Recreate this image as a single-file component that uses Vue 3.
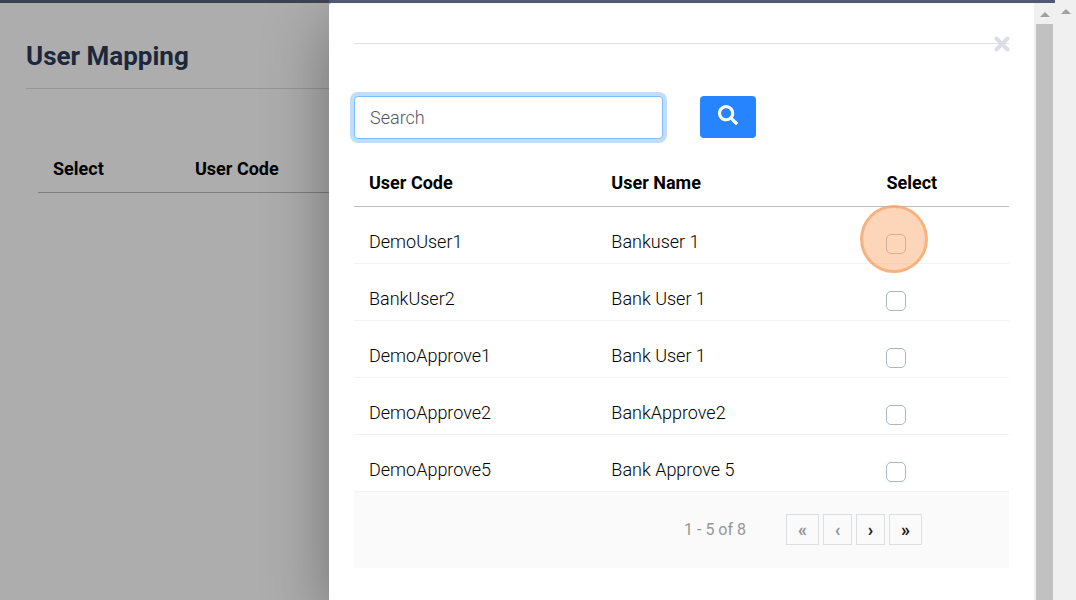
<script setup>
import { ref } from 'vue'

const search = ref('')
const users = ref([
  { code: 'DemoUser1', name: 'Bankuser 1', selected: false },
  { code: 'BankUser2', name: 'Bank User 1', selected: false },
  { code: 'DemoApprove1', name: 'Bank User 1', selected: false },
  { code: 'DemoApprove2', name: 'BankApprove2', selected: false },
  { code: 'DemoApprove5', name: 'Bank Approve 5', selected: false },
])
const pages = [
  { label: 'First page', glyph: '«', disabled: true, wide: true },
  { label: 'Previous page', glyph: '‹', disabled: true, wide: false },
  { label: 'Next page', glyph: '›', disabled: false, wide: false },
  { label: 'Last page', glyph: '»', disabled: false, wide: true },
]
</script>

<template>
  <div class="shell">
    <div class="viewport">
      <div class="topbar"></div>
      <main class="page">
        <h1>User Mapping</h1>
        <table class="mapping">
          <thead>
            <tr><th>Select</th><th>User Code</th></tr>
          </thead>
        </table>
      </main>

      <div class="overlay">
        <section class="modal" role="dialog" aria-label="Select user">
          <div class="content">
            <header class="modal-head">
              <button class="close" type="button" aria-label="Close">
                <svg viewBox="0 0 16 16" width="16" height="16">
                  <path d="M2.500 2.500 13.500 13.500M13.500 2.500 2.500 13.500" />
                </svg>
              </button>
            </header>

            <form class="search" @submit.prevent>
              <input v-model="search" type="text" placeholder="Search" aria-label="Search" />
              <button type="submit" aria-label="Search users">
                <svg viewBox="0 0 512 512" width="20" height="20">
                  <path d="M505 442.7 405.3 343c-4.500-4.500-10.600-7-17-7H372c27.600-35.300 44-79.700 44-128C416 93.100 322.900 0 208 0S0 93.100 0 208s93.100 208 208 208c48.300 0 92.700-16.400 128-44v16.300c0 6.400 2.500 12.500 7 17l99.700 99.700c9.400 9.400 24.600 9.400 33.900 0l28.300-28.300c9.400-9.400 9.400-24.600.100-34zM208 336c-70.700 0-128-57.200-128-128 0-70.700 57.200-128 128-128 70.700 0 128 57.200 128 128 0 70.700-57.200 128-128 128z" />
                </svg>
              </button>
            </form>

            <table class="users">
              <thead>
                <tr><th>User Code</th><th>User Name</th><th>Select</th></tr>
              </thead>
              <tbody>
                <tr v-for="(user, i) in users" :key="user.code">
                  <td>{{ user.code }}</td>
                  <td>{{ user.name }}</td>
                  <td>
                    <span class="pick">
                      <input v-model="user.selected" type="checkbox" :aria-label="'Select ' + user.code" />
                      <span v-if="i === 0" class="pointer"></span>
                    </span>
                  </td>
                </tr>
              </tbody>
            </table>

            <nav class="pager" aria-label="Pagination">
              <span class="range">1 - 5 of 8</span>
              <button
                v-for="p in pages"
                :key="p.label"
                type="button"
                :class="{ wide: p.wide }"
                :disabled="p.disabled"
                :aria-label="p.label"
              >{{ p.glyph }}</button>
            </nav>
          </div>
          <div class="scrollbar inner">
            <span class="arrow"></span>
            <span class="thumb"></span>
          </div>
        </section>
      </div>
    </div>
    <div class="scrollbar"><span class="arrow"></span></div>
  </div>
</template>

<style>
body {
  margin: 0;
}
</style>

<style scoped>
.shell {
  display: flex;
  height: 100vh;
  overflow: hidden;
  font-family: Roboto, "Liberation Sans", sans-serif;
  color: #212529;
}
.viewport {
  position: relative;
  flex: 1;
  min-width: 0;
  background: #adadad;
}
.topbar {
  height: 3px;
  background: linear-gradient(to right, #3a4252 329px, #4f5b75 329px);
}
.page {
  padding: 34px 24px 0 26px;
}
h1 {
  margin: 0;
  padding-bottom: 13px;
  border-bottom: 1px solid #969696;
  font-size: 26px;
  line-height: 38px;
  font-weight: 700;
  color: #1c273b;
}
.mapping {
  width: calc(100% - 12px);
  margin: 57px 0 0 12px;
  border-collapse: collapse;
  table-layout: fixed;
}
.mapping th {
  padding: 11px 15px;
  border-bottom: 1px solid #7e7e7e;
  text-align: left;
  font-size: 18px;
  line-height: 24px;
  color: #000;
}
.mapping th:first-child {
  width: 112px;
}
.overlay {
  position: absolute;
  inset: 3px 0 0 0;
  display: flex;
  padding-left: 329px;
  overflow: hidden;
}
.modal {
  flex: 1;
  display: flex;
  background: #fff;
  border-top-left-radius: 3px;
  box-shadow: 0 20px 64px rgba(0, 0, 0, 0.36);
}
.content {
  flex: 1;
  padding: 40px 25px 0;
}
.modal-head {
  position: relative;
  height: 52px;
  border-top: 1px solid #dfe1e4;
}
.close {
  position: absolute;
  top: -8px;
  right: -1px;
  width: 16px;
  height: 16px;
  padding: 0;
  border: 0;
  background: none;
}
.close svg {
  display: block;
  fill: none;
  stroke: #d4d6df;
  stroke-opacity: 0.8;
  stroke-width: 4;
  stroke-linecap: round;
}
.search {
  display: flex;
  gap: 37px;
}
.search input {
  box-sizing: border-box;
  width: 309px;
  height: 43px;
  padding: 0 15px;
  border: 1px solid #80bdff;
  border-radius: 4px;
  outline: none;
  background: #fff;
  box-shadow: 0 0 0 4px #c1ddfb;
  font: 300 18px/24px Roboto, "Liberation Sans", sans-serif;
  color: #495057;
}
.search input::placeholder {
  color: #4f585f;
  opacity: 1;
}
.search button {
  display: flex;
  justify-content: center;
  width: 56px;
  height: 42px;
  padding: 9px 0;
  border: 0;
  border-radius: 4px;
  background: #2684ff;
}
.search svg {
  fill: #fff;
}
.users {
  width: 100%;
  margin-top: 21px;
  border-collapse: collapse;
  table-layout: fixed;
}
.users th,
.users td {
  padding: 0 15px;
  text-align: left;
  font-size: 18px;
  line-height: 24px;
}
.users th {
  height: 46px;
  border-bottom: 1px solid #bdbdbd;
  color: #000;
}
.users th:first-child {
  width: 37%;
  box-sizing: border-box;
}
.users th:nth-child(2) {
  width: 42%;
  box-sizing: border-box;
}
.users td {
  height: 43px;
  padding-top: 13px;
  border-bottom: 1px solid #f2f2f2;
  font-weight: 300;
  color: #000;
}
.pick {
  position: relative;
  display: block;
  width: 20px;
  height: 20px;
  margin-top: 4px;
}
.pick input {
  display: block;
  appearance: none;
  box-sizing: border-box;
  width: 20px;
  height: 20px;
  margin: 0;
  border: 1px solid #adb5bd;
  border-radius: 5px;
  background: #fff;
}
.pointer {
  position: absolute;
  top: -29px;
  left: -26px;
  box-sizing: border-box;
  width: 68px;
  height: 68px;
  border: 3px solid rgba(243, 155, 89, 0.6);
  border-radius: 50%;
  background: rgba(250, 170, 110, 0.48);
  pointer-events: none;
}
.pager {
  display: flex;
  align-items: center;
  justify-content: flex-end;
  gap: 4px;
  box-sizing: border-box;
  height: 76px;
  padding: 0 87px 1px 0;
  background: #fafafa;
}
.range {
  margin-right: 36px;
  font-size: 16px;
  line-height: 24px;
  color: #95979a;
}
.pager button {
  box-sizing: border-box;
  width: 29px;
  height: 31px;
  padding: 0;
  border: 1px solid #dcdfe2;
  background: none;
  font: 700 18px/28px Roboto, "Liberation Sans", sans-serif;
  color: #16181b;
}
.pager button.wide {
  width: 33px;
}
.pager button:disabled {
  color: #8e9196;
}
.scrollbar {
  display: flex;
  flex-direction: column;
  align-items: center;
  flex: 0 0 21px;
  padding-top: 9px;
  background: #f0f0f0;
}
.inner {
  gap: 7px;
}
.arrow {
  width: 0;
  border: 5px solid transparent;
  border-top: 0;
  border-bottom-color: #a0a0a0;
}
.thumb {
  flex: 1;
  width: 17px;
  background: #c1c1c1;
}
</style>
